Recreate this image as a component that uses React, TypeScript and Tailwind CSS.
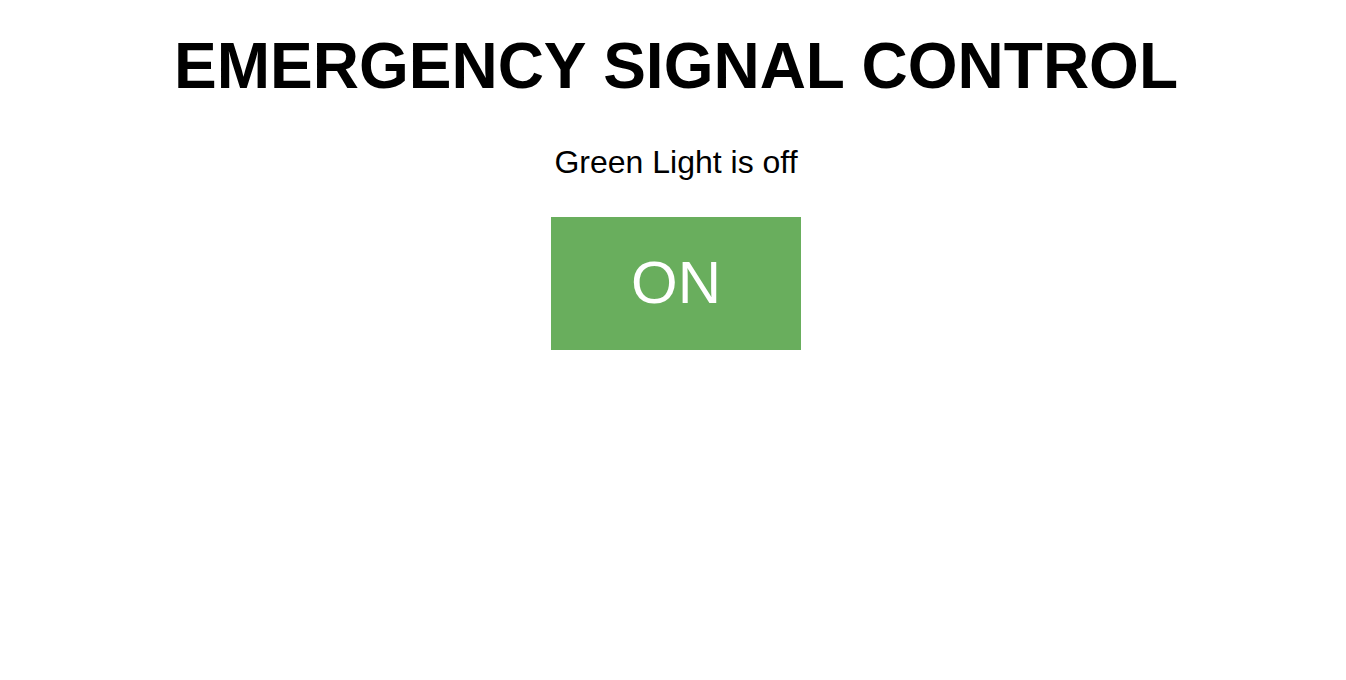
import React, { useState } from 'react';

const App: React.FC = () => {
    const [isOn, setIsOn] = useState(false);

    return (
        <div className="min-h-screen bg-white flex flex-col items-center pl-[6px] text-black" style={{ fontFamily: '"Liberation Sans", Arial, Helvetica, sans-serif' }}>
            <h1 className="mt-[30px] text-[64px] font-bold leading-[73.5px]">
                EMERGENCY SIGNAL CONTROL
            </h1>
            <p className="mt-[40px] text-[32px] leading-[37px]">
                Green Light is {isOn ? 'on' : 'off'}
            </p>
            <button
                onClick={() => setIsOn(!isOn)}
                className="mt-[36.5px] w-[250px] h-[133px] flex items-center justify-center pb-[2px] bg-[#69ae5d] text-white text-[60px] leading-[69px]"
            >
                {isOn ? 'OFF' : 'ON'}
            </button>
        </div>
    );
};

export default App;
